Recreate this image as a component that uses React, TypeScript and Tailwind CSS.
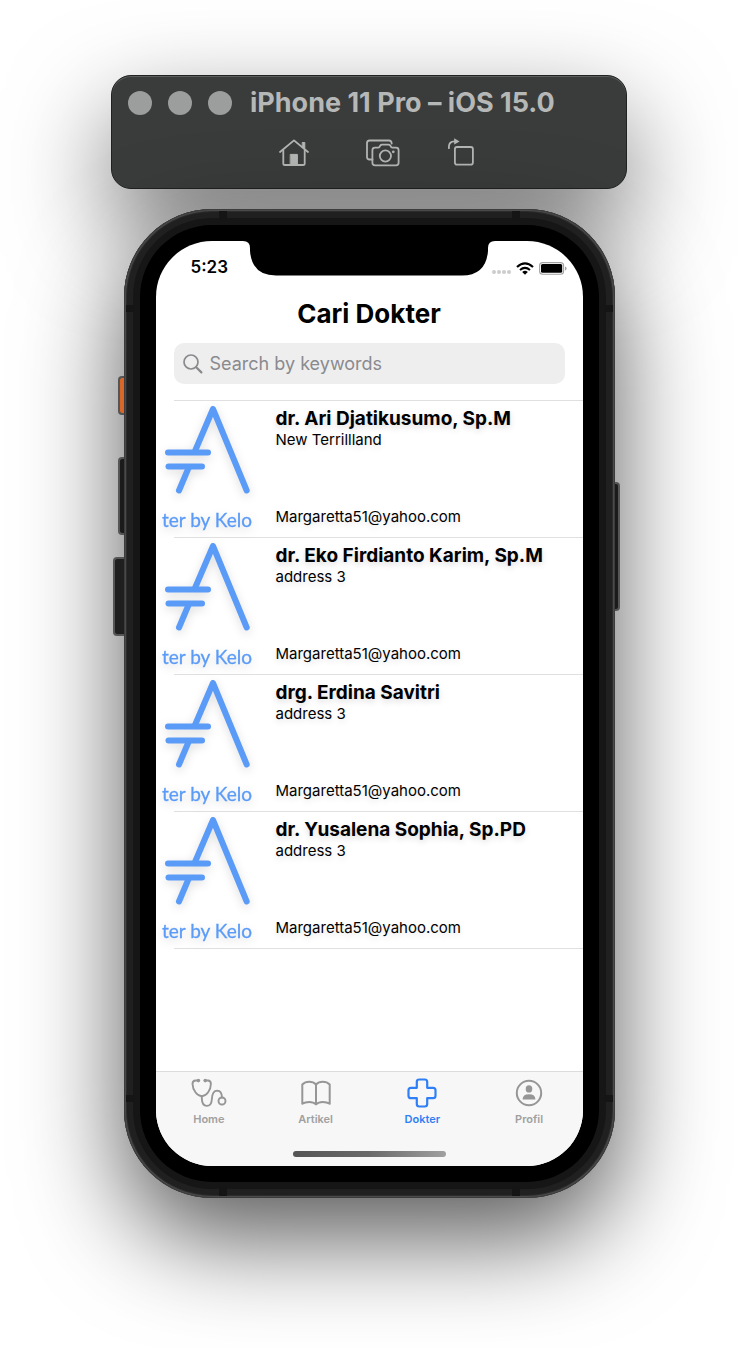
import React from "react";

type Doctor = { name: string; address: string; email: string };

const doctors: Doctor[] = [
  { name: "dr. Ari Djatikusumo, Sp.M", address: "New Terrillland", email: "Margaretta51@yahoo.com" },
  { name: "dr. Eko Firdianto Karim, Sp.M", address: "address 3", email: "Margaretta51@yahoo.com" },
  { name: "drg. Erdina Savitri", address: "address 3", email: "Margaretta51@yahoo.com" },
  { name: "dr. Yusalena Sophia, Sp.PD", address: "address 3", email: "Margaretta51@yahoo.com" },
];

function HomeIcon() {
  return (
    <svg width="32" height="30" viewBox="0 0 32 30" fill="none" stroke="#b4b6b4" strokeWidth="1.8" strokeLinecap="round" strokeLinejoin="round" aria-hidden="true">
      <path d="M2 14 L16 2.4 L30 14" />
      <path d="M5.3 12 V25.4 Q5.3 27 7 27 H25 Q26.7 27 26.7 25.4 V12" />
      <path d="M24.6 4.5 H26.8 V10.5 L24.6 8.8 Z" fill="#b4b6b4" strokeWidth="1" />
      <path d="M12.6 16.4 H19.4 V27 H12.6 Z" fill="#b4b6b4" strokeWidth="1" />
    </svg>
  );
}

function CameraIcon() {
  return (
    <svg width="34" height="30" viewBox="0 0 34 30" fill="none" stroke="#b4b6b4" strokeWidth="1.8" strokeLinecap="round" strokeLinejoin="round" aria-hidden="true">
      <path d="M6.5 21.5 H3.5 Q1 21.5 1 19 V5 Q1 2.5 3.5 2.5 H23 Q25.5 2.5 25.7 5.5" />
      <path d="M9 9.7 H12 Q13 9.7 13.6 8.7 L14.3 7.5 Q14.9 6.6 16 6.6 H22.5 Q23.6 6.6 24.2 7.5 L25 8.7 Q25.6 9.7 26.6 9.7 H30 Q32.6 9.7 32.6 12.2 V24.8 Q32.6 27.3 30 27.3 H9 Q6.4 27.3 6.4 24.8 V12.2 Q6.4 9.7 9 9.7 Z" />
      <circle cx="19.4" cy="18" r="5.6" />
      <circle cx="27.3" cy="13.8" r="1.4" fill="#b4b6b4" stroke="none" />
    </svg>
  );
}

function RotateIcon() {
  return (
    <svg width="28" height="30" viewBox="0 0 28 30" fill="none" stroke="#b4b6b4" strokeWidth="1.8" strokeLinecap="round" strokeLinejoin="round" aria-hidden="true">
      <rect x="6.9" y="9" width="18" height="17.6" rx="2.2" />
      <path d="M0.9 10.2 V8.5 Q1.100 3.6 6.4 3.4" />
      <path d="M6.2 0.2 L11.6 3.5 L6.2 6.6 Z" fill="#b4b6b4" stroke="none" />
    </svg>
  );
}

function SearchIcon() {
  return (
    <svg width="20" height="20" viewBox="0 0 20 20" fill="none" stroke="#8a8a8e" strokeWidth="1.7" strokeLinecap="round" aria-hidden="true">
      <circle cx="8" cy="8" r="7" />
      <path d="M13.2 13.2 L18.4 18.4" strokeWidth="2.2" />
    </svg>
  );
}

function WifiIcon() {
  return (
    <svg width="18" height="13" viewBox="0 0 18 13" fill="none" stroke="#000" strokeWidth="2.2" aria-hidden="true">
      <path d="M1 5 Q9 -2.2 17 5" />
      <path d="M4 8 Q9 3.7 14 8" strokeWidth="2" />
      <path d="M9 12.8 L6.2 9.9 Q9 7.7 11.8 9.9 Z" fill="#000" stroke="none" />
    </svg>
  );
}

function BatteryIcon() {
  return (
    <svg width="28" height="13" viewBox="0 0 28 13" aria-hidden="true">
      <rect x="0.6" y="0.6" width="24" height="11.6" rx="3" fill="none" stroke="#a3a3a3" strokeWidth="1.1" />
      <rect x="2" y="2" width="21.2" height="8.8" rx="1.6" fill="#000" />
      <path d="M26 4.4 Q27.6 5 27.6 6.4 Q27.6 7.8 26 8.4 Z" fill="#a3a3a3" />
    </svg>
  );
}

function DoctorLogo() {
  return (
    <svg
      className="drop-shadow-[0_3px_5px_rgba(0,0,0,0.14)]"
      width="92"
      height="136"
      viewBox="0 0 92 136"
      role="img"
      aria-label="ter by Kelo"
    >
      <g fill="none" stroke="#5b9bf8" strokeWidth="6" strokeLinecap="round" strokeLinejoin="round">
        <path d="M34 50 L52 8 L85.700 89.500" />
        <path d="M7 51.600 H47" />
        <path d="M7.500 65.500 H41" />
        <path d="M27.500 67 L18 89.500" />
      </g>
      <text x="46" y="126" textAnchor="middle" fontFamily="Lato, sans-serif" fontSize="19" fill="#5b9bf8" stroke="#5b9bf8" strokeWidth="0.3">
        ter by Kelo
      </text>
    </svg>
  );
}

function StethoscopeIcon() {
  return (
    <svg width="36" height="30" viewBox="0 0 36 30" fill="none" stroke="#969696" strokeWidth="1.9" strokeLinecap="round" strokeLinejoin="round" aria-hidden="true">
      <path d="M6.500 2.500 H4.600 Q1.500 2.600 1.500 6 Q1.700 11 4.600 14.500 Q7.400 18.200 10.800 18.200 Q14.200 18.200 17 14.500 Q19.800 11 19.900 6 Q19.900 2.600 17 2.500 H15" />
      <path d="M10.800 18.300 V20.500 Q11 27.800 15.800 27.900 Q20.400 27.900 20.800 21.500 Q21.200 12.600 26.200 12.600 Q30.800 12.800 31 19.500" />
      <circle cx="31" cy="23" r="3.500" />
      <circle cx="7.400" cy="2.600" r="1.800" fill="#969696" stroke="none" />
      <circle cx="14.200" cy="2.600" r="1.800" fill="#969696" stroke="none" />
    </svg>
  );
}

function BookIcon() {
  return (
    <svg width="32" height="30" viewBox="0 0 32 30" fill="none" stroke="#969696" strokeWidth="2" strokeLinejoin="round" aria-hidden="true">
      <path d="M16 6.500 V26.600" />
      <path d="M16 6.500 Q13.500 3.800 9.200 3.800 Q5 3.800 2.300 6.500 V25.800 Q5 23.900 9.200 23.900 Q13.500 23.900 16 26.400 Q18.500 23.900 22.800 23.900 Q27 23.900 29.700 25.800 V6.500 Q27 3.800 22.800 3.800 Q18.500 3.800 16 6.500 Z" />
    </svg>
  );
}

function CrossIcon() {
  return (
    <svg width="30" height="30" viewBox="0 0 30 30" fill="none" stroke="#2f7ff6" strokeWidth="2.200" strokeLinejoin="round" aria-hidden="true">
      <path d="M12.200 1.500 H17.800 Q20.200 1.500 20.200 3.900 V9.800 H26.100 Q28.500 9.800 28.500 12.200 V17.800 Q28.500 20.200 26.100 20.200 H20.200 V26.100 Q20.200 28.500 17.800 28.500 H12.200 Q9.800 28.500 9.800 26.100 V20.200 H3.900 Q1.500 20.200 1.500 17.800 V12.200 Q1.500 9.800 3.900 9.800 H9.800 V3.900 Q9.800 1.500 12.200 1.500 Z" />
    </svg>
  );
}

function ProfileIcon() {
  return (
    <svg width="30" height="30" viewBox="0 0 30 30" aria-hidden="true">
      <circle cx="15" cy="15" r="12.200" fill="none" stroke="#969696" strokeWidth="2" />
      <ellipse cx="15" cy="10.900" rx="3.300" ry="3.700" fill="#969696" />
      <path d="M8.600 21.500 Q8.600 16.200 15 16.200 Q21.400 16.200 21.400 21.500 Z" fill="#969696" />
    </svg>
  );
}

const tabs = [
  { label: "Home", icon: <StethoscopeIcon />, active: false },
  { label: "Artikel", icon: <BookIcon />, active: false },
  { label: "Dokter", icon: <CrossIcon />, active: true },
  { label: "Profil", icon: <ProfileIcon />, active: false },
];

function SimulatorBar() {
  return (
    <header className="w-full max-w-[516px] rounded-[20px] border border-[#202221] bg-[#3a3c3b] px-4 pt-2 pb-5 shadow-[inset_0_1px_0_#5c5e5d,0_40px_100px_rgba(0,0,0,0.55)]">
      <div className="flex items-center">
        <div className="flex gap-4">
          <button aria-label="Close" className="size-6 rounded-full bg-[#9c9e9d]" />
          <button aria-label="Minimize" className="size-6 rounded-full bg-[#9c9e9d]" />
          <button aria-label="Zoom" className="size-6 rounded-full bg-[#9c9e9d]" />
        </div>
        <h1 className="ml-[18px] text-[27px] leading-[38px] font-bold whitespace-nowrap text-[#b6b8b7]">iPhone 11 Pro – iOS 15.0</h1>
      </div>
      <div className="mt-4 flex justify-center gap-14 pl-4">
        <button aria-label="Home"><HomeIcon /></button>
        <button aria-label="Screenshot"><CameraIcon /></button>
        <button aria-label="Rotate" className="-ml-2"><RotateIcon /></button>
      </div>
    </header>
  );
}

function StatusBar() {
  return (
    <div className="flex h-[54px] items-center justify-between pr-4 pl-[35px]">
      <span className="text-[17px] font-semibold">5:23</span>
      <div className="flex items-center gap-[5px]">
        <div className="mt-2 flex gap-px">
          <i className="size-1 rounded-full bg-[#cccccc]" />
          <i className="size-1 rounded-full bg-[#cccccc]" />
          <i className="size-1 rounded-full bg-[#cccccc]" />
          <i className="size-1 rounded-full bg-[#cccccc]" />
        </div>
        <WifiIcon />
        <BatteryIcon />
      </div>
    </div>
  );
}

function DoctorRow({ doctor }: { doctor: Doctor }) {
  return (
    <li className="flex pl-[5px]">
      <div className="w-[92px] shrink-0">
        <DoctorLogo />
      </div>
      <div className="ml-[23px] flex min-w-0 flex-1 flex-col pt-[6px] pb-2">
        <h3 className="text-[19px] leading-6 font-bold whitespace-nowrap [text-shadow:0_3px_6px_rgba(0,0,0,0.15)]">{doctor.name}</h3>
        <p className="text-[15px] leading-[18px] [text-shadow:0_3px_6px_rgba(0,0,0,0.12)]">{doctor.address}</p>
        <p className="mt-auto text-[15px] leading-6 [text-shadow:0_3px_6px_rgba(0,0,0,0.12)]">{doctor.email}</p>
      </div>
    </li>
  );
}

function Screen() {
  return (
    <main className="relative flex min-h-[925px] flex-col overflow-hidden rounded-[56px] bg-white text-black">
      <svg className="absolute top-0 left-1/2 -translate-x-1/2" width="252" height="35" viewBox="0 0 252 35" aria-hidden="true">
        <path d="M0 0 Q7 0 7 7 V10 Q9 34.500 33 34.500 H219 Q243 34.500 245 10 V7 Q245 0 252 0 Z" fill="#000" />
      </svg>
      <StatusBar />
      <h2 className="text-center text-[26px] leading-[38px] font-bold">Cari Dokter</h2>
      <label className="mx-[18px] mt-[10px] flex h-[41px] items-center gap-[7px] rounded-[10px] bg-[#eeeeee] px-[9px]">
        <SearchIcon />
        <input aria-label="Search" placeholder="Search by keywords" className="min-w-0 flex-1 bg-transparent text-[18px] outline-none placeholder:text-[#8a8a8e]" />
      </label>
      <ul className="mt-4">
        {doctors.map((doctor) => (
          <React.Fragment key={doctor.name}>
            <li aria-hidden="true" className="ml-[18px] h-px bg-[#e0e0e0]" />
            <DoctorRow doctor={doctor} />
          </React.Fragment>
        ))}
        <li aria-hidden="true" className="ml-[18px] h-px bg-[#e0e0e0]" />
      </ul>
      <nav className="mt-auto border-t border-[#dcdcdc] bg-[#f7f7f7] pt-[6px] pb-[9px]">
        <div className="grid grid-cols-4">
          {tabs.map((tab) => (
            <a
              key={tab.label}
              href="#"
              className={
                tab.active
                  ? "flex flex-col items-center text-[11px] leading-[22px] font-semibold text-[#2f7ff6]"
                  : "flex flex-col items-center text-[11px] leading-[22px] font-semibold text-[#a0a0a0]"
              }
            >
              {tab.icon}
              {tab.label}
            </a>
          ))}
        </div>
        <div className="mx-auto mt-[21px] h-[6px] w-[153px] rounded-full bg-linear-to-r from-[#555555] via-[#6a6a6a] to-[#a0a0a0]" />
      </nav>
    </main>
  );
}

function Phone() {
  return (
    <section className="relative mt-5 w-full max-w-[491px] rounded-[88px] shadow-[0_40px_100px_rgba(0,0,0,0.65)]">
      <i className="absolute top-[167px] -left-[6px] h-[39px] w-2 rounded-l-[4px] border-2 border-r-0 border-[#555555] bg-[#d9672a]" />
      <i className="absolute top-[248px] -left-[6px] h-[78px] w-2 rounded-l-[4px] border-2 border-r-0 border-[#555555] bg-[#1b1b1b]" />
      <i className="absolute top-[348px] -left-[11px] h-[79px] w-3 rounded-l-[4px] border-2 border-r-0 border-[#555555] bg-[#1f1f1f]" />
      <i className="absolute top-[273px] -right-[5px] h-[129px] w-2 rounded-r-[4px] border-2 border-l-0 border-[#555555] bg-[#1b1b1b]" />
      <div className="relative rounded-[88px] bg-[#202020] p-4 shadow-[inset_0_0_0_1px_#3c3c3c,inset_0_0_0_2px_#4a4a4a,inset_0_0_0_3px_#2c2c2c]">
        <i className="absolute top-[2px] left-[95px] h-[10px] w-2 bg-[#151515]" />
        <i className="absolute top-[2px] right-[95px] h-[10px] w-2 bg-[#151515]" />
        <i className="absolute bottom-[2px] left-[95px] h-[10px] w-2 bg-[#151515]" />
        <i className="absolute right-[95px] bottom-[2px] h-[10px] w-2 bg-[#151515]" />
        <i className="absolute top-[96px] left-[2px] h-[7px] w-[9px] bg-[#151515]" />
        <i className="absolute top-[96px] right-[2px] h-[7px] w-[9px] bg-[#151515]" />
        <i className="absolute bottom-[96px] left-[2px] h-[7px] w-[9px] bg-[#151515]" />
        <i className="absolute right-[2px] bottom-[96px] h-[7px] w-[9px] bg-[#151515]" />
        <div className="rounded-[72px] bg-black p-4 shadow-[0_0_0_7px_#161616]">
          <Screen />
        </div>
      </div>
    </section>
  );
}

export default function App() {
  return (
    <div className="flex min-h-screen flex-col items-center overflow-hidden bg-white px-6 pt-[75px] pb-[150px] font-[Inter,sans-serif]">
      <SimulatorBar />
      <Phone />
    </div>
  );
}
